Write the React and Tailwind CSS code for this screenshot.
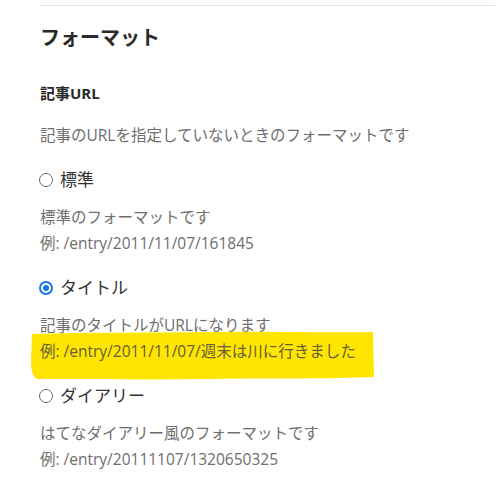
import React from 'react';

const font = { fontFamily: '"Open Sans", "Noto Sans CJK JP", sans-serif' };

const Radio = ({ checked, label }) => (
  <div className="flex items-center h-[26px] text-[17px] text-[#333]">
    {checked ? (
      <span className="shrink-0 w-[14px] h-[14px] rounded-full border-2 border-[#1a73e8] flex items-center justify-center ml-[-1px]">
        <span className="w-[6px] h-[6px] rounded-full bg-[#1a73e8]" />
      </span>
    ) : (
      <span className="shrink-0 w-[14px] h-[14px] rounded-full border border-[#6b6b6b] ml-[-1px]" />
    )}
    <span className="ml-[7px] leading-[26px]">{label}</span>
  </div>
);

const Highlight = () => (
  <svg
    className="absolute left-[-10px] top-[-7px] w-[345px] h-[50px]"
    viewBox="0 0 345 50"
    preserveAspectRatio="none"
  >
    <path
      d="M2 3 C60 1 120 2 180 1 C240 0 300 2 343 1 L344 46 C300 48 240 47 180 48 C120 49 60 48 8 48 C3 47 1 40 1 30 Z"
      fill="#ffe500"
    />
  </svg>
);

const Option = ({ checked, label, desc, example, marked }) => (
  <div className="mt-[19px]">
    <Radio checked={checked} label={label} />
    <div className="mt-[11px] text-[15.5px] leading-[26px] text-[#6e6e6e]">
      <p>{desc}</p>
      <p className="relative">
        {marked && <Highlight />}
        <span className={marked ? 'relative text-[#66603a]' : 'relative'}>{example}</span>
      </p>
    </div>
  </div>
);

export default function App() {
  return (
    <div className="w-[496px] h-[481px] bg-white overflow-hidden" style={font}>
      <div className="pl-[40px] pt-[5px]">
        <div className="border-t border-[#e3e3e3] mr-[1px]" />
        <h2 className="mt-[17px] text-[20px] leading-[30px] font-semibold text-[#2a2a2a]">
          フォーマット
        </h2>
        <h3 className="mt-[28px] text-[15px] leading-[24px] font-bold text-[#2a2a2a]">
          記事URL
        </h3>
        <p className="mt-[17px] text-[15.5px] leading-[26px] text-[#6e6e6e]">
          記事のURLを指定していないときのフォーマットです
        </p>
        <div className="mt-[1px]">
          <Option
            label="標準"
            desc="標準のフォーマットです"
            example="例: /entry/2011/11/07/161845"
          />
          <Option
            checked
            marked
            label="タイトル"
            desc="記事のタイトルがURLになります"
            example="例: /entry/2011/11/07/週末は川に行きました"
          />
          <Option
            label="ダイアリー"
            desc="はてなダイアリー風のフォーマットです"
            example="例: /entry/20111107/1320650325"
          />
        </div>
      </div>
    </div>
  );
}
